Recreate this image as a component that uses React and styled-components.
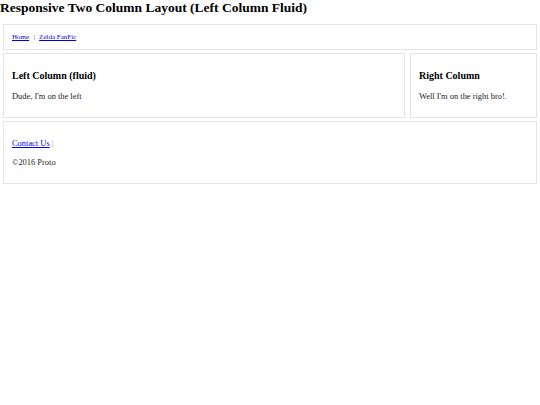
import React from "react";
import styled, { createGlobalStyle } from "styled-components";

const Global = createGlobalStyle`
  html, body { margin: 0; padding: 0; background: #fff; }
  body { font-family: "Liberation Serif", "Times New Roman", serif; color: #111; }
`;

const Page = styled.div`
  display: flex;
  flex-direction: column;
  padding: 0 3px;
`;

const Title = styled.h1`
  margin: 0 -3px 8.6px;
  font-size: 13.5px;
  line-height: 15.4px;
  font-weight: bold;
  color: #000;
`;

const Stack = styled.div`
  display: flex;
  flex-direction: column;
  gap: 3px;
`;

const Box = styled.div`
  border: 1px solid #e5e5e5;
  padding: 8px;
  box-sizing: border-box;
`;

const Nav = styled(Box)`
  font-size: 7px;
  line-height: 8px;
  display: flex;
  align-items: center;
`;

const Link = styled.a`
  color: #0000ee;
  text-decoration: underline;
`;

const Sep = styled.span`
  margin: 0 4.3px;
  color: #333;
`;

const Row = styled.div`
  display: flex;
  gap: 5px;
`;

const Column = styled(Box)`
  flex: ${(p) => (p.$fixed ? "0 0 127px" : "1 1 auto")};
  min-width: 0;
`;

const Heading = styled.h3`
  margin: 8px 0 9px;
  font-size: 10px;
  line-height: 11.5px;
  font-weight: bold;
  color: #000;
`;

const Text = styled.p`
  margin: 0 0 8px;
  font-size: 8.44px;
  line-height: 10px;
  color: #222;
`;

const Footer = styled(Box)``;

const FootLine = styled.p`
  margin: 8.5px 0;
  font-size: 8.44px;
  line-height: 10px;
  color: #222;
`;

const Pipe = styled.span`
  color: #999;
`;

export default function App() {
  return (
    <>
      <Global />
      <Page>
        <Title>Responsive Two Column Layout (Left Column Fluid)</Title>
        <Stack>
          <Nav>
            <Link href="#">Home</Link>
            <Sep>|</Sep>
            <Link href="#">Zelda FanFic</Link>
          </Nav>
          <Row>
            <Column>
              <Heading>Left Column (fluid)</Heading>
              <Text>Dude, I'm on the left</Text>
            </Column>
            <Column $fixed>
              <Heading>Right Column</Heading>
              <Text>Well I'm on the right bro!.</Text>
            </Column>
          </Row>
          <Footer>
            <FootLine>
              <Link href="#">Contact Us</Link> <Pipe>|</Pipe>
            </FootLine>
            <FootLine>©2016 Proto</FootLine>
          </Footer>
        </Stack>
      </Page>
    </>
  );
}
